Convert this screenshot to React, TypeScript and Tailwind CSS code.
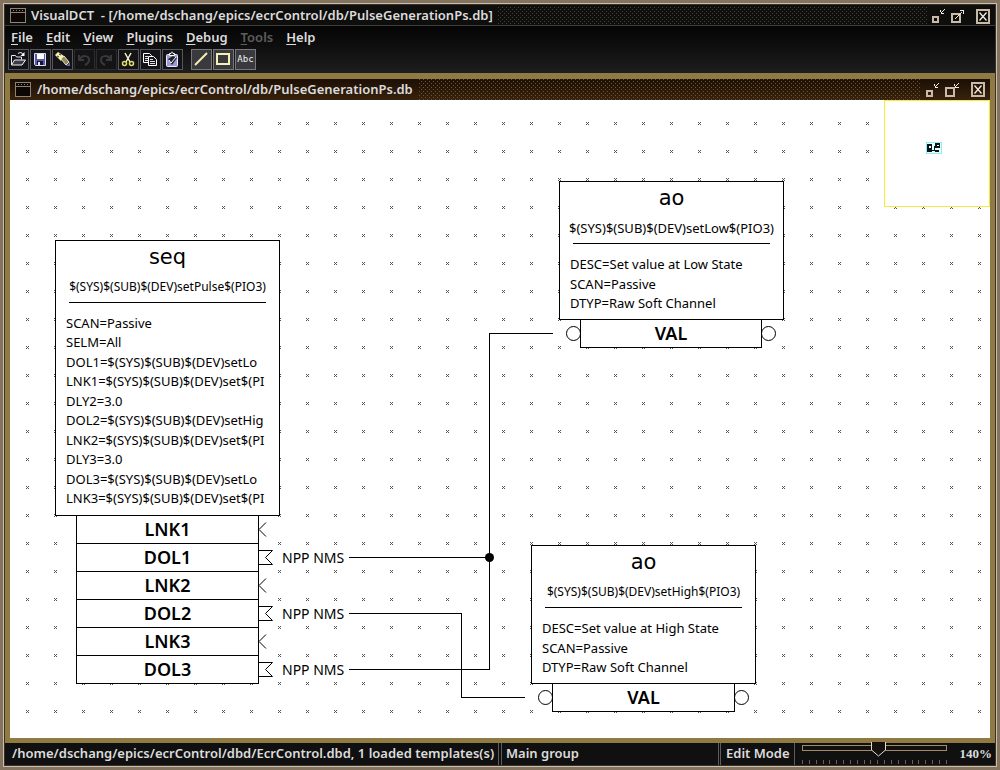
import React, { useState } from "react";

const PATH = "/home/dschang/epics/ecrControl/db/PulseGenerationPs.db";

function Texture({ id, color }: { id: string; color: string }) {
  return (
    <svg className="h-full min-w-0 flex-1" aria-hidden="true">
      <defs>
        <pattern id={id} width="4" height="4" patternUnits="userSpaceOnUse">
          <rect x="0" y="0" width="1" height="1" fill={color} />
          <rect x="2" y="2" width="1" height="1" fill={color} />
        </pattern>
      </defs>
      <rect width="100%" height="100%" fill={`url(#${id})`} />
    </svg>
  );
}

function WindowIcon() {
  return (
    <svg width="16" height="16" viewBox="0 0 16 16" className="shrink-0" aria-hidden="true" shapeRendering="crispEdges">
      <rect x="0.5" y="0.5" width="15" height="14" rx="1" fill="#0c0705" stroke="#8d8274" />
      <path d="M1 4.5h14" stroke="#8d8274" />
      <path d="M3 2.5h1M6 2.5h1M9 2.5h1M12 2.5h1" stroke="#8d8274" />
    </svg>
  );
}

function WindowButtons({ inner }: { inner: boolean }) {
  return (
    <div className="flex shrink-0 items-center">
      <button aria-label="Minimize" className="mr-1 block">
        <svg width="15" height="16" viewBox="0 0 15 16" fill="none" shapeRendering="crispEdges">
          <rect x="2" y="9" width="5" height="5" stroke="#c9bba8" strokeWidth="2" />
          <path d="M13 1h1v1h-1zM12 2h1v1h-1zM11 3h1v1h-1zM10 4h1v1h-1zM9 2h1v4h3v-1h-3z" fill="#f2eee6" />
        </svg>
      </button>
      <button aria-label={inner ? "Restore" : "Maximize"} className={`block ${inner ? "mr-[11px]" : "mr-[10px]"}`}>
        <svg width="16" height="16" viewBox="0 0 16 16" fill="none" shapeRendering="crispEdges">
          <rect x="2" y="6" width="8" height="8" stroke="#c9bba8" strokeWidth="2" />
          {inner ? (
            <path d="M14 1h1v1h-1zM13 2h1v1h-1zM12 3h1v1h-1zM11 4h1v1h-1zM10 2h1v4h4v-1h-4z" fill="#f2eee6" />
          ) : (
            <path d="M10 2h4v4h-1V3h-3zM12 4h-1v1h1zM11 5h-1v1h1zM9 6h1v1H9zM8 7h1v1H8zM7 8h1v1H7zM6 9h1v1H6zM5 10h1v1H5z" fill="#f2eee6" />
          )}
        </svg>
      </button>
      <button aria-label="Close" className="block">
        <svg width="14" height="15" viewBox="0 0 14 15" fill="none">
          <rect x="1" y="1" width="12" height="13" stroke="#c9bba8" strokeWidth="2" />
          <path d="M3.500 3.500l7 8M10.500 3.500l-7 8" stroke="#f2eee6" strokeWidth="1.300" />
        </svg>
      </button>
    </div>
  );
}

const MENUS = ["File", "Edit", "View", "Plugins", "Debug", "Tools", "Help"];

const ICONS: Record<string, React.ReactNode> = {
  Open: (
    <>
      <path d="M2.500 15V5.500h4l1 1.500h5v2.500" stroke="#e8e8ee" />
      <path d="M2.500 15l3-5h11l-3.500 5z" fill="#3c3c48" stroke="#f4f4f8" />
      <path d="M9 3.500c2-1.500 4-1 5 .8" stroke="#fff" />
      <path d="M15.500 2v4h-4z" fill="#fff" />
    </>
  ),
  Save: (
    <>
      <path d="M3.500 3.500h11v12h-10l-1-1z" fill="#5a5aa6" stroke="#dcdcf4" />
      <rect x="6" y="4" width="7" height="5" fill="#fff" />
      <rect x="6" y="11" width="6" height="4" fill="#14142c" />
      <rect x="7" y="12" width="2" height="3" fill="#e6e6ff" />
    </>
  ),
  Highlight: (
    <>
      <path d="M2 5l3-3 6 4-3 5z" fill="#f6f2b0" />
      <path d="M4 6l2 1M6 4l2 1" stroke="#333" />
      <path d="M8 9l3-3 5 6-3 3z" fill="#8f8a60" stroke="#e8e4b8" />
      <path d="M13 16l4-4v4z" fill="#6565b8" />
    </>
  ),
  Undo: <path d="M4 5v5h5M5 9c2-4 9-4 9 1 0 3-2 4-4 5" stroke="#39393c" strokeWidth="2" />,
  Redo: <path d="M14 5v5H9M13 9c-2-4-9-4-9 1 0 3 2 4 4 5" stroke="#39393c" strokeWidth="2" />,
  Cut: (
    <>
      <path d="M6 3l5 9M12 3L7 12" stroke="#f8f6c8" strokeWidth="1.500" />
      <circle cx="5.500" cy="13.500" r="2" stroke="#e3df63" strokeWidth="1.500" />
      <circle cx="12.500" cy="13.500" r="2" stroke="#e3df63" strokeWidth="1.500" />
    </>
  ),
  Copy: (
    <>
      <path d="M2.500 3.500h6l2 2v7h-8z" fill="#17171b" stroke="#fff" />
      <path d="M4 6.500h3M4 8.500h3M4 10.500h3" stroke="#ddd" />
      <path d="M7.500 6.500h5l3 3v6h-8z" fill="#17171b" stroke="#fff" />
      <path d="M9 9.500h3M9 11.500h5M9 13.500h5" stroke="#ddd" />
    </>
  ),
  Paste: (
    <>
      <rect x="3.500" y="4.500" width="11" height="12" rx="1" fill="#9a9ad8" stroke="#e8e8ff" />
      <path d="M6.500 5.500v-2h1.500c0-2 2-2 2 0h1.500v2z" fill="#222" stroke="#fff" />
      <path d="M5 9l5-3 4 2-5 7z" fill="#22222c" />
      <path d="M6 10l2 3 5-6" stroke="#fff" />
    </>
  ),
  Line: <path d="M3 15L15 3" stroke="#f5f0b4" strokeWidth="2" />,
  Box: <rect x="3" y="4" width="12" height="10" stroke="#f5f0b4" strokeWidth="2" />,
};

function Tool({ name }: { name: string }) {
  const drawing = name === "Line" || name === "Box" || name === "Text";
  return (
    <button
      aria-label={name}
      className={`flex h-[21px] w-[21px] items-center justify-center border ${
        drawing ? "border-[#77777c] bg-[#3a3a3e]" : name === "Undo" || name === "Redo" ? "border-[#2c2c2f] bg-[#141416]" : "border-[#55555a] bg-[#141418]"
      }`}
    >
      {name === "Text" ? (
        <span className="font-['DejaVu_Sans_Mono','DejaVu_Sans'] text-[9px] leading-none text-[#f2f2f2]">Abc</span>
      ) : (
        <svg width="19" height="19" viewBox="0 0 19 19" fill="none" aria-hidden="true">
          {ICONS[name]}
        </svg>
      )}
    </button>
  );
}

type RecordProps = {
  place: string;
  body: string;
  title: string;
  name: string;
  nameSize: string;
  fields: string[];
  list: string;
  ports: string[];
  portWidth: string;
};

function RecordNode({ place, body, title, name, nameSize, fields, list, ports, portWidth }: RecordProps) {
  return (
    <section className={`absolute w-[225px] ${place}`}>
      <div className={`flex flex-col border border-black bg-white ${body}`}>
        <h2 className="mt-1 text-center font-['DejaVu_Sans'] text-[21px] leading-6">{title}</h2>
        <p className={`mt-2 text-center leading-5 whitespace-nowrap ${nameSize}`}>{name}</p>
        <hr className="mx-[13px] mt-[5px] border-black" />
        <ul className={`mx-[10px] mt-[11px] flex flex-col justify-between text-[13px] leading-[19px] whitespace-nowrap ${list}`}>
          {fields.map((f) => (
            <li key={f}>{f}</li>
          ))}
        </ul>
      </div>
      <ul className={`ml-[21px] border-x border-black bg-white ${portWidth}`}>
        {ports.map((p) => (
          <li key={p} className="flex h-7 items-center justify-center border-b border-black text-[18px] font-semibold">
            {p}
          </li>
        ))}
      </ul>
    </section>
  );
}

function Diagram() {
  return (
    <main className="relative min-h-0 flex-1 overflow-hidden bg-white font-normal text-black">
      <svg className="absolute inset-0 h-full w-full" aria-hidden="true" fill="none">
        <defs>
          <pattern id="grid" x="3" y="9" width="28" height="28" patternUnits="userSpaceOnUse">
            <path d="M13 13h1v1h-1zM15 13h1v1h-1zM14 14h1v1h-1zM13 15h1v1h-1zM15 15h1v1h-1z" fill="#555" shapeRendering="crispEdges" />
          </pattern>
        </defs>
        <rect width="100%" height="100%" fill="url(#grid)" />
        <g stroke="#000">
          <path d="M339 457.500H479.500M543 233.500H479.500V569.500H339M339 513.500H451.500V597.500H515" shapeRendering="crispEdges" />
          {[429.5, 485.5, 541.5].map((y) => (
            <path key={y} d={`M256 ${y - 7}l-7 7 7 7`} />
          ))}
          {[457.5, 513.5, 569.5].map((y) => (
            <path key={y} d={`M249 ${y - 7}h13.500l-7 7 7 7h-13.500`} />
          ))}
          <circle cx="563.500" cy="233.500" r="7" />
          <circle cx="758.500" cy="233.500" r="7" />
          <circle cx="535.500" cy="597.500" r="7" />
          <circle cx="731.500" cy="597.500" r="7" />
        </g>
        <circle cx="479.500" cy="457.500" r="4.500" fill="#000" />
      </svg>

      <RecordNode
        place="left-[45px] top-[140px]"
        body="h-[276px]"
        title="seq"
        name="$(SYS)$(SUB)$(DEV)setPulse$(PIO3)"
        nameSize="text-[12px]"
        fields={[
          "SCAN=Passive",
          "SELM=All",
          "DOL1=$(SYS)$(SUB)$(DEV)setLo",
          "LNK1=$(SYS)$(SUB)$(DEV)set$(PI",
          "DLY2=3.0",
          "DOL2=$(SYS)$(SUB)$(DEV)setHig",
          "LNK2=$(SYS)$(SUB)$(DEV)set$(PI",
          "DLY3=3.0",
          "DOL3=$(SYS)$(SUB)$(DEV)setLo",
          "LNK3=$(SYS)$(SUB)$(DEV)set$(PI",
        ]}
        list="h-[194px]"
        ports={["LNK1", "DOL1", "LNK2", "DOL2", "LNK3", "DOL3"]}
        portWidth="w-[183px]"
      />
      <RecordNode
        place="left-[549px] top-[81px]"
        body="h-[139px]"
        title="ao"
        name="$(SYS)$(SUB)$(DEV)setLow$(PIO3)"
        nameSize="text-[13px]"
        fields={["DESC=Set value at Low State", "SCAN=Passive", "DTYP=Raw Soft Channel"]}
        list="h-[58px]"
        ports={["VAL"]}
        portWidth="w-[182px]"
      />
      <RecordNode
        place="left-[521px] top-[445px]"
        body="h-[139px]"
        title="ao"
        name="$(SYS)$(SUB)$(DEV)setHigh$(PIO3)"
        nameSize="text-[12px]"
        fields={["DESC=Set value at High State", "SCAN=Passive", "DTYP=Raw Soft Channel"]}
        list="h-[58px]"
        ports={["VAL"]}
        portWidth="w-[183px]"
      />

      <span className="absolute left-[272px] top-[448px] text-[14px] leading-5">NPP NMS</span>
      <span className="absolute left-[272px] top-[504px] text-[14px] leading-5">NPP NMS</span>
      <span className="absolute left-[272px] top-[560px] text-[14px] leading-5">NPP NMS</span>

      <div className="absolute right-0 top-0 h-[107px] w-[106px] border border-[#f4ec3c] bg-white">
        <svg className="absolute left-[41px] top-[41px]" width="16" height="12" viewBox="0 0 16 12" shapeRendering="crispEdges" aria-hidden="true">
          <rect x="0.500" y="0.500" width="15" height="11" fill="#e6ffff" stroke="#8eeef0" />
          <path d="M1 2h5v8H1zM9 1h5v5h-5zM9 8h4v2H9zM6 8h3v1H6zM8 4h1v4H8z" fill="#0b1418" />
          <path d="M3 4h2v2H3zM11 3h2v1h-2z" fill="#fff" />
        </svg>
      </div>
    </main>
  );
}

function ZoomSlider() {
  const [zoom, setZoom] = useState(140);
  const at = ((zoom - 30) / 210) * 100;
  return (
    <>
      <div className="relative ml-[7px] h-full w-[145px] shrink-0">
        <div className="mt-[2px] h-[6px] border border-[#a08a74] bg-[#15100c]" />
        <div className="mt-[9px] flex h-1 justify-between">
          {Array.from({ length: 22 }, (_, i) => (
            <span key={i} className="w-px bg-[#6b5f52]" />
          ))}
        </div>
        <svg
          className="absolute -top-px -ml-[7px]"
          style={{ left: `${at}%` }}
          width="15"
          height="15"
          viewBox="0 0 15 15"
          aria-hidden="true"
        >
          <path d="M.5 0v8l7 6 7-6V0" fill="#14110e" stroke="#e4dccf" />
        </svg>
        <input
          type="range"
          aria-label="Zoom"
          min={30}
          max={240}
          value={zoom}
          onChange={(e) => setZoom(Number(e.target.value))}
          className="absolute inset-x-0 top-0 h-4 w-full cursor-pointer opacity-0"
        />
      </div>
      <output className="flex flex-1 items-center justify-end pr-1 font-['Liberation_Serif'] text-[13px] font-bold">{zoom}%</output>
    </>
  );
}

export default function App() {
  return (
    <div className="h-screen bg-[#84745f] p-[3px] font-['Noto_Sans',sans-serif]">
      <div className="flex h-full flex-col border border-[#c9bfae] bg-[#0c0c0c] text-[13px] font-semibold text-[#dcdcdc] outline-1 -outline-offset-2 outline-[#3a3028]">
        <header className="flex h-[22px] shrink-0 items-center border-b border-[#3c3c3a] bg-[#0e0e0d] pl-[6px] pr-[6px] pt-[3px]">
          <WindowIcon />
          <h1 className="mx-[5px] whitespace-pre">{`VisualDCT  - [${PATH}]`}</h1>
          <Texture id="outer-texture" color="#45433f" />
          <div className="ml-1">
            <WindowButtons inner={false} />
          </div>
        </header>

        <div className="shrink-0 bg-linear-to-b from-[#050505] to-[#1e1e20]">
          <nav className="flex h-[21px] items-center gap-[13px] px-[7px]">
            {MENUS.map((m) => (
              <button key={m} className={`leading-4 ${m === "Tools" ? "text-[#5e5e5e]" : ""}`}>
                <span className="underline underline-offset-2">{m[0]}</span>
                {m.slice(1)}
              </button>
            ))}
          </nav>
          <div className="flex h-[26px] items-start gap-px px-1 pt-[2px] font-normal">
            {["Open", "Save", "Highlight", "Undo", "Redo", "Cut", "Copy", "Paste"].map((t) => (
              <Tool key={t} name={t} />
            ))}
            <span className="w-[6px]" />
            {["Line", "Box", "Text"].map((t) => (
              <Tool key={t} name={t} />
            ))}
          </div>
        </div>

        <div className="mx-px flex min-h-0 flex-1 flex-col border-[5px] border-t-[6px] border-[#8f7a42]">
          <div className="flex h-[21px] shrink-0 items-center bg-linear-to-b from-[#1c0f06] to-[#38220c] pl-[5px] pr-[5px]">
            <WindowIcon />
            <h2 className="mx-[6px] whitespace-nowrap">{PATH}</h2>
            <Texture id="inner-texture" color="#6e5430" />
            <div className="ml-1">
              <WindowButtons inner={true} />
            </div>
          </div>
          <Diagram />
        </div>

        <footer className="flex h-[23px] shrink-0 items-stretch whitespace-nowrap border-b border-[#55504a] bg-[#101010]">
          <div className="flex w-[495px] items-center border-r border-[#5c5c5c] pl-2">
            /home/dschang/epics/ecrControl/dbd/EcrControl.dbd, 1 loaded templates(s)
          </div>
          <div className="ml-[2px] flex flex-1 items-center border-x border-[#5c5c5c] pl-1">Main group</div>
          <div className="ml-px flex w-[75px] items-center border-x border-[#5c5c5c] pl-[5px]">Edit Mode</div>
          <div className="flex w-[201px] items-stretch">
            <ZoomSlider />
          </div>
        </footer>
      </div>
    </div>
  );
}
